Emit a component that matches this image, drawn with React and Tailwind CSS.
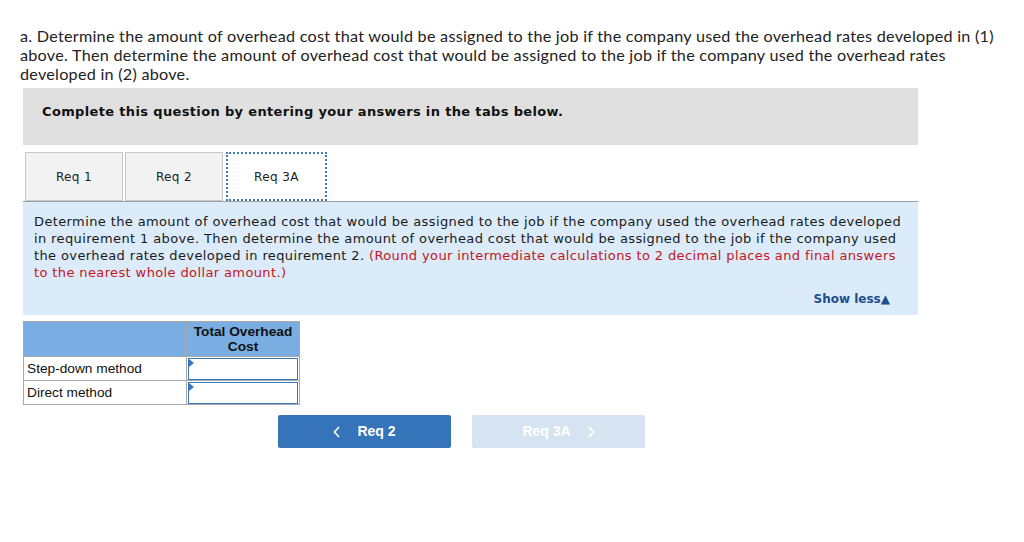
import React, { useState } from 'react'

const TABS = ['Req 1', 'Req 2', 'Req 3A']

const ROWS = ['Step-down method', 'Direct method']

const AnswerCell = () => (
  <td className="border border-[#a9a9a9] p-0 h-[24px] w-[113px]">
    <div className="relative h-[22px] mx-[1px] border border-[#3a78bd] bg-white">
      <span className="absolute left-0 top-0 w-0 h-0 border-t-[4px] border-b-[4px] border-l-[5px] border-t-transparent border-b-transparent border-l-[#3a78bd]" />
    </div>
  </td>
)

export default function App() {
  const [tab, setTab] = useState(2)

  return (
    <div className="w-[1024px] h-[542px] bg-white overflow-hidden pt-[26px]">
      <p className="px-[20px] text-[16.2px] tracking-[0.25px] leading-[19px] text-[#222] font-['Lato',sans-serif]">
        a. Determine the amount of overhead cost that would be assigned to the job if the company used the overhead rates developed in (1) above. Then determine the amount of overhead cost that would be assigned to the job if the company used the overhead rates developed in (2) above.
      </p>

      <div className="ml-[23px] w-[895px] mt-[5px]">
        {/* Instruction bar */}
        <div className="h-[57px] bg-[#e0e0e0] flex items-center pl-[19px] pb-[9px]">
          <span className="text-[13px] tracking-[0.35px] font-bold text-[#111] font-['DejaVu_Sans',Verdana,sans-serif]">
            Complete this question by entering your answers in the tabs below.
          </span>
        </div>

        {/* Tabs */}
        <div className="flex items-end gap-[2px] mt-[7px] pl-[2px] border-b border-[#a0a0a0] h-[50px]">
          {TABS.map((t, i) => (
            <button
              key={t}
              onClick={() => setTab(i)}
              className={`h-[49px] w-[98px] text-[12px] tracking-[0.4px] text-[#222] font-['DejaVu_Sans',Verdana,sans-serif] ${
                tab === i
                  ? 'bg-white border-2 border-dotted border-[#3a78c8] w-[101px] ml-[1px]'
                  : 'bg-[#f2f2f2] border border-[#c8c8c8]'
              }`}
            >
              {t}
            </button>
          ))}
        </div>

        {/* Question panel */}
        <div className="bg-[#dbebf9] h-[113px] pt-[11px] pl-[11px] pr-[6px] font-['DejaVu_Sans',Verdana,sans-serif] text-[13px] tracking-[0.38px] leading-[17px] text-[#1a1a1a]">
          <p>
            Determine the amount of overhead cost that would be assigned to the job if the company used the overhead rates developed in requirement 1 above. Then determine the amount of overhead cost that would be assigned to the job if the company used the overhead rates developed in requirement 2.{' '}
            <span className="text-[#c4161c]">(Round your intermediate calculations to 2 decimal places and final answers to the nearest whole dollar amount.)</span>
          </p>
          <div className="flex justify-end pr-[22px] mt-[10px]">
            <span className="text-[12px] tracking-normal font-bold text-[#1f4e8c]">Show less▲</span>
          </div>
        </div>

        {/* Answer table */}
        <table className="mt-[6px] border-collapse font-['Liberation_Sans',Arial,sans-serif] text-[13.7px] text-[#111]">
          <thead>
            <tr className="bg-[#7aaee2]">
              <th className="border border-[#a9a9a9] w-[163px] h-[35px]" />
              <th className="border border-[#a9a9a9] w-[113px] h-[35px] font-bold leading-[15px] align-top pt-[2px]">
                Total Overhead
                <br />
                Cost
              </th>
            </tr>
          </thead>
          <tbody>
            {ROWS.map(r => (
              <tr key={r}>
                <td className="border border-[#a9a9a9] px-[3px] h-[24px] pt-[1px]">{r}</td>
                <AnswerCell />
              </tr>
            ))}
          </tbody>
        </table>

        {/* Nav buttons */}
        <div className="flex gap-[21px] ml-[255px] mt-[10px] font-['Liberation_Sans',Arial,sans-serif]">
          <button className="w-[173px] h-[33px] rounded-[2px] bg-[#3574b8] text-white text-[14px] font-bold flex items-center justify-center gap-[16px]">
            <svg width="8" height="12" viewBox="0 0 8 12" fill="none" stroke="white" strokeWidth="1.6">
              <path d="M6 1 L1.5 6 L6 11" />
            </svg>
            Req 2
          </button>
          <button className="w-[173px] h-[33px] rounded-[2px] bg-[#d6e4f1] text-white text-[14px] font-bold flex items-center justify-center gap-[16px]">
            Req 3A
            <svg width="8" height="12" viewBox="0 0 8 12" fill="none" stroke="white" strokeWidth="1.6">
              <path d="M2 1 L6.5 6 L2 11" />
            </svg>
          </button>
        </div>
      </div>
    </div>
  )
}
